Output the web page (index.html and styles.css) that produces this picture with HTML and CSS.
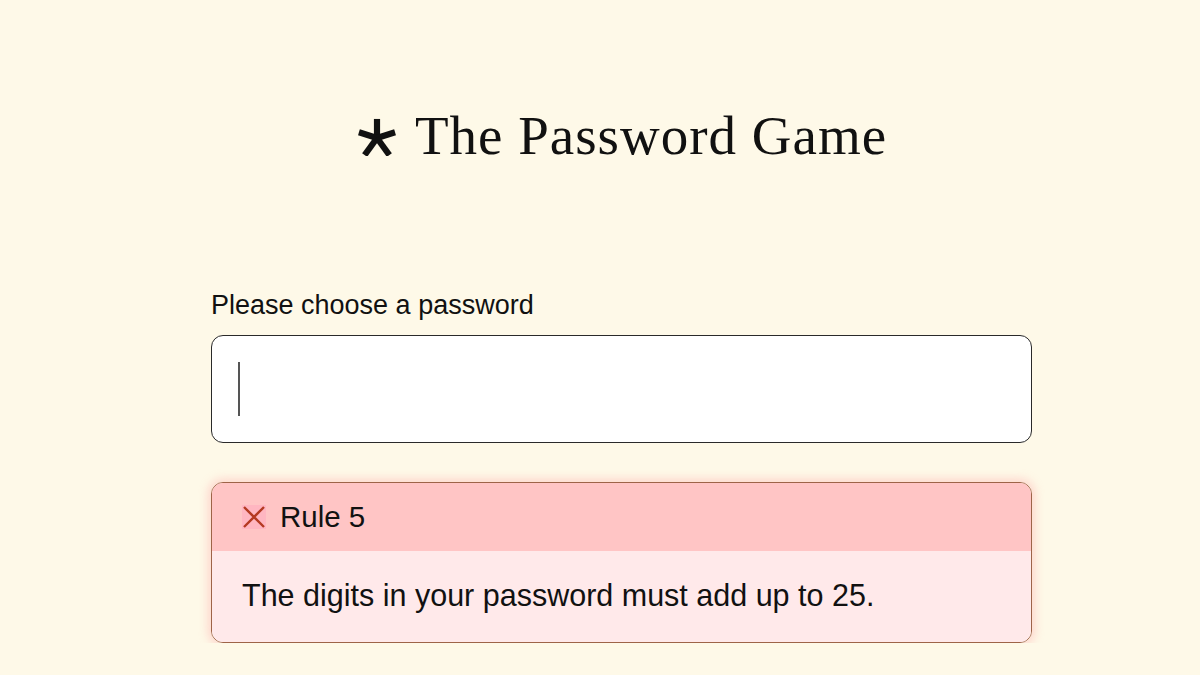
FILE: index.html
```html
<!DOCTYPE html>
<html lang="en">
<head>
    <meta charset="UTF-8">
    <meta name="viewport" content="width=device-width, initial-scale=1.0">
    <title>The Password Game</title>
    <link rel="stylesheet" href="styles.css">
</head>
<body>
    <div class="page">
        <h1 class="title">
            <svg class="title-icon" viewBox="0 0 40 40" width="40" height="40" aria-hidden="true">
                <g stroke="#111" stroke-width="6.5" stroke-linecap="butt" fill="none">
                    <line x1="20" y1="21" x2="20" y2="1"/>
                    <line x1="20" y1="21" x2="1" y2="15"/>
                    <line x1="20" y1="21" x2="39" y2="15"/>
                    <line x1="20" y1="21" x2="7" y2="39"/>
                    <line x1="20" y1="21" x2="33" y2="39"/>
                </g>
            </svg>
            <span>The Password Game</span>
        </h1>

        <label class="field-label" for="password">Please choose a password</label>
        <div class="password-box">
            <span class="caret"></span>
        </div>

        <div class="rule rule-error">
            <div class="rule-top">
                <span class="rule-icon">
                    <svg viewBox="0 0 24 24" width="24" height="24" aria-hidden="true">
                        <path d="M2 2 L22 22 M22 2 L2 22" stroke="#b53a22" stroke-width="2.4" fill="none"/>
                    </svg>
                </span>
                <span>Rule 5</span>
            </div>
            <div class="rule-desc">The digits in your password must add up to 25.</div>
        </div>
    </div>
</body>
</html>
```

FILE: styles.css
```css
* {
    margin: 0;
    padding: 0;
    box-sizing: border-box;
}
body {
    background: #fef9e8;
    font-family: "Liberation Sans", Arial, sans-serif;
    color: #111;
}
.page {
    width: 821px;
    margin-left: 211px;
    padding-top: 106px;
}
.title {
    display: flex;
    align-items: center;
    justify-content: center;
    gap: 19px;
    margin-left: 146px;
    margin-right: 144px;
    font-family: "Liberation Serif", "Times New Roman", serif;
    font-weight: normal;
    font-size: 55px;
    letter-spacing: 1px;
    line-height: 60px;
    color: #111;
    white-space: nowrap;
}
.title-icon {
    width: 38px;
    height: 38px;
    flex: none;
    margin-top: 2px;
}
.field-label {
    display: block;
    margin-top: 124px;
    font-size: 27px;
    line-height: 30px;
    color: #111;
}
.password-box {
    margin-top: 15px;
    height: 108px;
    background: #fff;
    border: 1px solid #2a2a2a;
    border-radius: 12px;
    padding: 26px 0 0 26px;
}
.caret {
    display: block;
    width: 2px;
    height: 54px;
    background: #555;
}
.rule {
    margin-top: 39px;
    border: 1px solid #9e6448;
    border-radius: 12px;
    overflow: hidden;
    box-shadow: 0 0 10px 3px rgba(255, 170, 170, 0.45);
}
.rule-top {
    display: flex;
    align-items: center;
    gap: 14px;
    height: 68px;
    padding-left: 30px;
    background: #ffc5c5;
    font-size: 29.5px;
}
.rule-icon {
    display: flex;
    background: #ffb6c1;
}
.rule-icon svg {
    width: 24px;
    height: 24px;
}
.rule-desc {
    height: 91px;
    display: flex;
    align-items: center;
    padding: 0 0 2px 30px;
    background: #ffe9ea;
    font-size: 30.5px;
}
```
